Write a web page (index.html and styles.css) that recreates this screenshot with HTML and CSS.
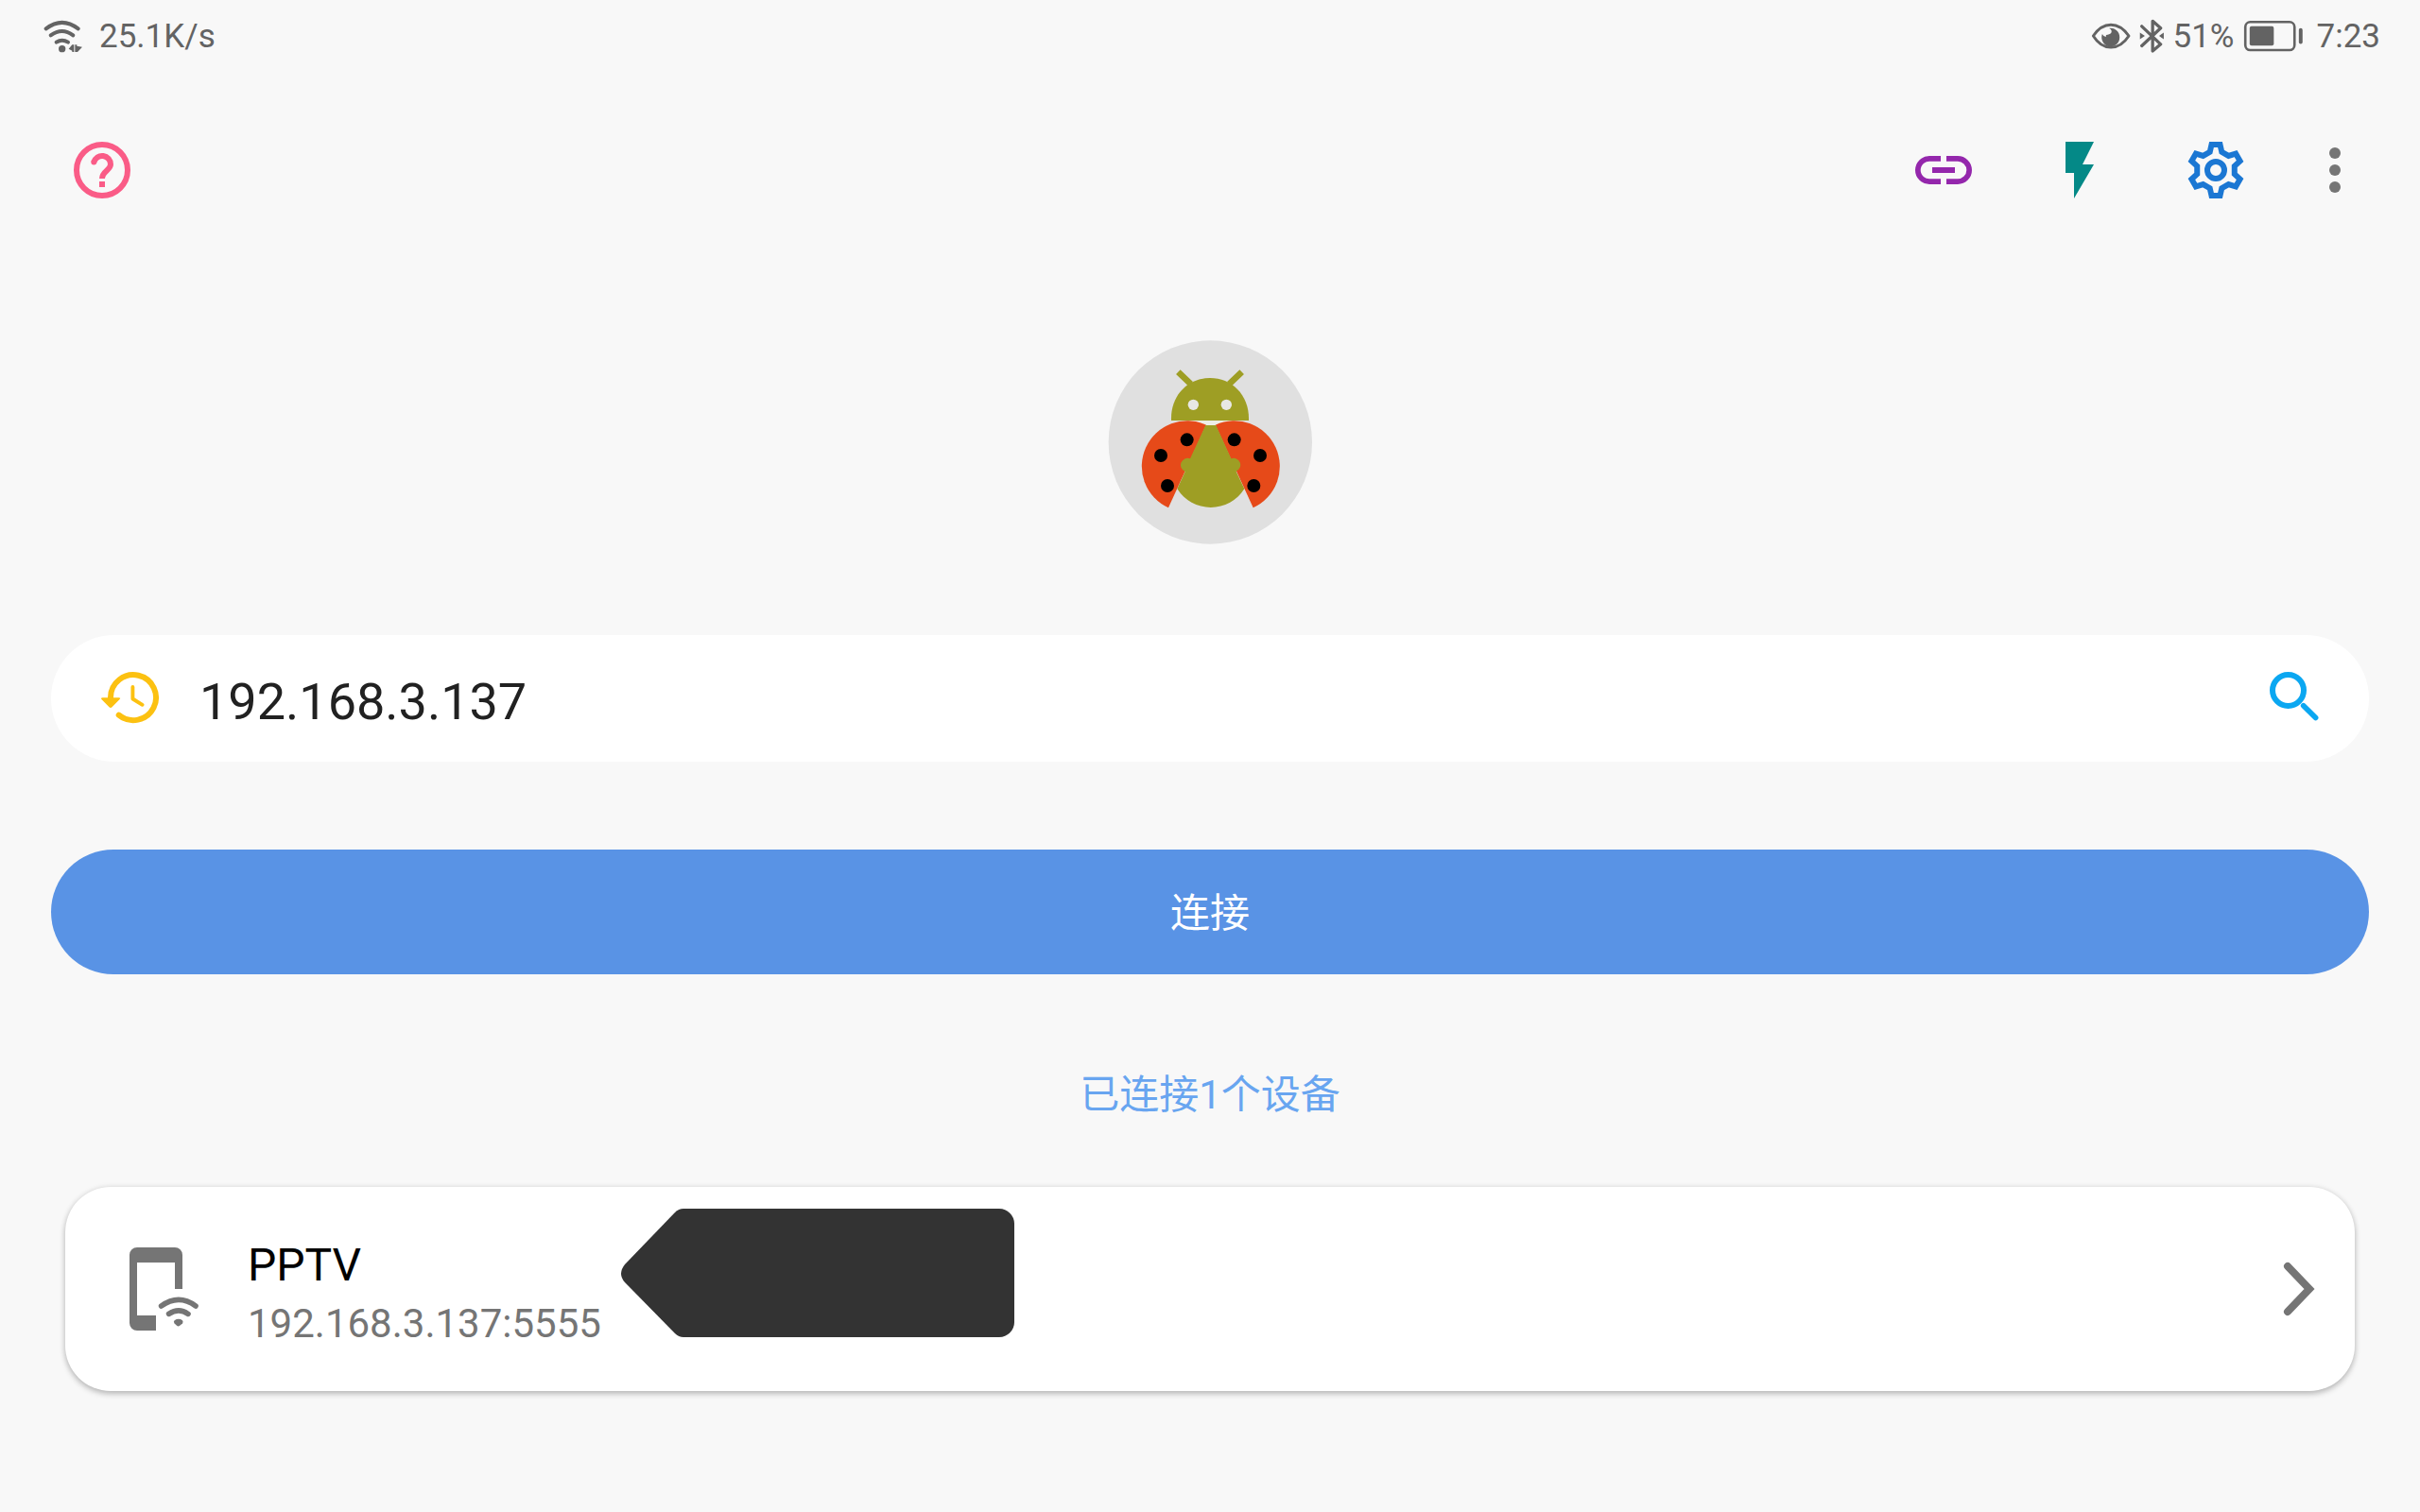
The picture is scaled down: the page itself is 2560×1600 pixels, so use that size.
FILE: index.html
```html
<!DOCTYPE html>
<html lang="zh-CN">
<head>
    <meta charset="UTF-8">
    <meta name="viewport" content="width=device-width, initial-scale=1.0">
    <title>ADB</title>
    <link rel="stylesheet" href="styles.css">
</head>
<body>
    <div class="status-bar">
        <div class="status-group network">
            <svg class="wifi" viewBox="48 54 126 105" aria-hidden="true">
                <g fill="none" stroke="currentColor" stroke-width="12" stroke-linecap="round">
                    <path d="M56 82Q107 43 158 82"/>
                    <path d="M71 103Q107 77 142 103"/>
                    <path d="M89 125Q107 113 126 125"/>
                </g>
                <circle cx="107" cy="146" r="11"/>
                <path d="M128 146l11-13h6v23h-6v-4zM148 133h6v4l17 3-15 16h-8z"/>
            </svg>
            <span>25.1K/s</span>
        </div>
        <div class="status-group indicators">
            <svg class="eye" viewBox="64 54 126 110" aria-hidden="true">
                <path d="M70 109Q94 73 127 73T185 109Q161 146 127 146T70 109z" fill="none" stroke="currentColor" stroke-width="9" stroke-linejoin="round"/>
                <path d="M99 103Q104 113 112 111Q109 104 117 105Q131 102 129 92Q128 87 121 84A29 30 0 1 1 99 103z"/>
            </svg>
            <svg class="bluetooth" viewBox="221 54 80 110" aria-hidden="true">
                <path d="M228 78l61 58-26 22V61l26 23-61 57" fill="none" stroke="currentColor" stroke-width="10" stroke-linecap="round" stroke-linejoin="round"/>
                <path d="M222 98l16 11-16 11zM299 98l-15 11 15 11z"/>
            </svg>
            <span>51%</span>
            <svg class="battery" viewBox="545 54 192 110" aria-hidden="true">
                <rect x="550" y="64" width="159" height="91" rx="16" fill="none" stroke="currentColor" stroke-width="8"/>
                <rect x="564" y="78" width="78" height="62" rx="6"/>
                <rect x="723" y="84" width="12" height="51" rx="6"/>
            </svg>
            <span class="clock">7:23</span>
        </div>
    </div>

    <header class="toolbar">
        <button class="tool help" type="button" aria-label="帮助">
            <svg viewBox="0 0 24 24">
                <g fill="none" stroke="currentColor" stroke-width="2">
                    <circle cx="12" cy="12" r="9"/>
                    <path d="M9.100 9.200A3 3 0 0 1 15 10c0 2-3 2.400-3 5"/>
                </g>
                <circle cx="9.100" cy="9.200" r="1"/>
                <path d="M11 16h2v2h-2z"/>
            </svg>
        </button>
        <span class="spacer"></span>
        <button class="tool link" type="button" aria-label="链接">
            <svg viewBox="0 0 24 24"><path d="M3.900 12c0-1.710 1.390-3.100 3.100-3.100h4V7H7a5 5 0 0 0 0 10h4v-1.900H7c-1.710 0-3.100-1.390-3.100-3.100zM8 13h8v-2H8zM17 7h-4v1.900h4a3.100 3.100 0 0 1 0 6.200h-4V17h4a5 5 0 0 0 0-10z"/></svg>
        </button>
        <button class="tool flash" type="button" aria-label="快捷">
            <svg viewBox="0 0 24 24"><path d="M7 2v11h3v9l7-12h-4l4-8z"/></svg>
        </button>
        <button class="tool settings" type="button" aria-label="设置">
            <svg viewBox="-12 -12 24 24">
                <g fill="none" stroke="currentColor" stroke-width="2">
                    <path d="M-1.500-9H1.500L2.100-6.400 4.490-5.020 7.040-5.800 8.540-3.200 6.590-1.380V1.380L8.540 3.200 7.040 5.800 4.490 5.020 2.100 6.400 1.500 9H-1.500L-2.100 6.400-4.490 5.020-7.040 5.800-8.540 3.200-6.590 1.380V-1.380L-8.540-3.200-7.040-5.800-4.490-5.020-2.100-6.400z"/>
                    <circle r="3"/>
                </g>
            </svg>
        </button>
        <button class="tool more" type="button" aria-label="更多">
            <svg viewBox="0 0 24 24"><circle cx="12" cy="6" r="2"/><circle cx="12" cy="12" r="2"/><circle cx="12" cy="18" r="2"/></svg>
        </button>
    </header>

    <main class="content">
        <svg class="logo" viewBox="36 30 648 648" aria-hidden="true">
            <circle cx="361" cy="354" r="323" fill="#e0e0e0"/>
            <!-- head -->
            <path d="M237 285C234 205 290 150 360 150S486 205 483 285z" fill="#9e9e24"/>
            <path d="M259 131l40 38M461 131l-40 38" stroke="#9e9e24" stroke-width="20"/>
            <circle cx="307" cy="235" r="17" fill="#e8e8e4"/>
            <circle cx="412" cy="235" r="17" fill="#e8e8e4"/>
            <path d="M290 286h140l-50 16h-40z" fill="#eeeee6"/>
            <!-- wings -->
            <path d="M348 299A144 144 0 1 0 228 562z" fill="#e64a19"/>
            <path d="M377 299A144 144 0 1 1 497 562z" fill="#e64a19"/>
            <!-- body -->
            <path d="M346 300h33l48 106a20 20 0 0 1 16 40l26 56A126 126 0 0 1 256 502l25-55a20 20 0 0 1 16-41z" fill="#9e9e24"/>
            <g fill="#000">
                <circle cx="287" cy="346" r="21"/>
                <circle cx="204" cy="396" r="21"/>
                <circle cx="225" cy="492" r="21"/>
                <circle cx="437" cy="346" r="21"/>
                <circle cx="519" cy="396" r="21"/>
                <circle cx="499" cy="492" r="21"/>
            </g>
        </svg>

        <form class="address">
            <button class="icon-button history" type="button" aria-label="历史记录">
                <svg viewBox="0 0 24 24">
                    <g fill="none" stroke="currentColor" stroke-linecap="round">
                        <path d="M5 12.500V12a8 8 0 1 1 2.900 6.200" stroke-width="2"/>
                        <path d="M12.800 8.300v4.200l3.400 2.100" stroke-width="1.300" stroke-linejoin="round"/>
                    </g>
                    <path d="M2.100 12.100h5.900q.7 0 .2.600L5.500 15.400q-.5.500-1 0L1.800 12.700q-.4-.6.3-.6z"/>
                </svg>
            </button>
            <input class="ip" type="text" value="192.168.3.137" aria-label="IP 地址">
            <button class="icon-button search" type="button" aria-label="搜索">
                <svg viewBox="0 0 24 24">
                    <g fill="none" stroke="currentColor">
                        <circle cx="9.500" cy="9.500" r="5.500" stroke-width="2"/>
                        <path d="M14.900 14.900l4.300 4.300" stroke-width="1.900" stroke-linecap="round"/>
                    </g>
                </svg>
            </button>
        </form>

        <button class="connect" type="button">连接</button>

        <p class="summary">已连接1个设备</p>

        <a class="device" href="#">
            <svg class="device-icon" viewBox="0 0 24 24" aria-hidden="true">
                <path d="M17 1H7a2 2 0 0 0-2 2v18a2 2 0 0 0 2 2h5v-4H7V5h10v7h2V3a2 2 0 0 0-2-2z"/>
                <g fill="none" stroke="currentColor" stroke-width="1.400" stroke-linecap="round">
                    <path d="M13.400 16.500Q18 13.200 22.500 16.500"/>
                    <path d="M15.400 18.600Q18 16.800 20.500 18.600"/>
                </g>
                <path d="M16.900 20.300Q18 19.600 19 20.300q.3.400 0 .8l-.7.600q-.4.300-.8 0l-.6-.6q-.4-.4 0-.8z"/>
            </svg>
            <span class="device-text">
                <span class="device-name">PPTV</span>
                <span class="device-address">192.168.3.137:5555</span>
            </span>
            <svg class="tag" viewBox="0 0 416 136" aria-hidden="true">
                <path d="M66 0H400a16 16 0 0 1 16 16V120a16 16 0 0 1-16 16H66Q61 136 57 132L4 78Q-4 69 4 59L57 4Q61 0 66 0z"/>
            </svg>
            <svg class="chevron" viewBox="0 0 48 64" aria-hidden="true">
                <path d="M12 8l23 24-23 24" fill="none" stroke="currentColor" stroke-width="8" stroke-linecap="round"/>
            </svg>
        </a>
    </main>
</body>
</html>
```

FILE: styles.css
```css
* {
    box-sizing: border-box;
}
body {
    margin: 0;
    background-color: #f8f8f8;
    font-family: Roboto, "Noto Sans CJK SC", sans-serif;
}
button {
    padding: 0;
    border: none;
    background: none;
    font-family: inherit;
    cursor: pointer;
}
svg {
    display: block;
    flex-shrink: 0;
    fill: currentColor;
}

/* status bar */
.status-bar {
    display: flex;
    justify-content: space-between;
    height: 76px;
    padding: 0 42px 0 46px;
    color: #636363;
    font-size: 35px;
}
.status-group {
    display: flex;
    align-items: center;
}
.network {
    gap: 17px;
}
.indicators {
    gap: 9px;
}
.wifi {
    width: 42px;
    height: 35px;
}
.eye {
    width: 42px;
    height: 36px;
}
.bluetooth {
    width: 27px;
    height: 36px;
}
.battery {
    width: 64px;
    height: 36px;
}
.clock {
    margin-left: 5px;
}

/* toolbar */
.toolbar {
    display: flex;
    margin-top: 32px;
    padding: 0 36px;
}
.spacer {
    flex: 1;
}
.tool {
    display: flex;
    align-items: center;
    justify-content: center;
    width: 144px;
    height: 144px;
}
.tool svg,
.icon-button svg {
    width: 72px;
    height: 72px;
}
.help {
    color: #fa5c87;
}
.link {
    color: #9427ac;
}
.flash {
    color: #048987;
}
.settings {
    color: #1b77d3;
}
.more {
    width: 108px;
    color: #757575;
}

/* content */
.content {
    display: flex;
    flex-direction: column;
    padding: 108px 54px;
}
.logo {
    align-self: center;
    width: 216px;
    height: 216px;
}
.address {
    display: flex;
    align-items: center;
    height: 134px;
    margin-top: 96px;
    padding: 0 42px 2px 48px;
    border-radius: 67px;
    background-color: #fff;
}
.history {
    color: #fcc111;
}
.search {
    color: #0ba7f1;
}
.ip {
    flex: 1;
    min-width: 0;
    height: 100%;
    padding: 8px 37px 0;
    border: none;
    outline: none;
    background: none;
    color: #212121;
    font-family: inherit;
    font-size: 54px;
}
.connect {
    height: 132px;
    margin-top: 93px;
    padding-bottom: 6px;
    border-radius: 66px;
    background-color: #5993e5;
    color: #fff;
    font-size: 42px;
}
.summary {
    margin: 97px 0 66px;
    color: #68a5f0;
    font-size: 42px;
    line-height: 62px;
    text-align: center;
}
.device {
    display: flex;
    align-items: center;
    height: 216px;
    margin: 0 15px;
    padding: 0 35px 0 48px;
    border-radius: 48px;
    background-color: #fff;
    box-shadow: 0 3px 6px rgba(0, 0, 0, 0.24), 0 0 6px rgba(0, 0, 0, 0.08);
    color: #757575;
    text-decoration: none;
}
.device-icon {
    width: 96px;
    height: 96px;
}
.device-text {
    display: flex;
    flex-direction: column;
    margin-left: 49px;
}
.device-name {
    color: #000;
    font-size: 48px;
    line-height: 74px;
}
.device-address {
    font-size: 42px;
    line-height: 50px;
}
.tag {
    align-self: flex-start;
    width: 416px;
    height: 136px;
    margin: 23px 0 0 21px;
    color: #333;
}
.chevron {
    width: 48px;
    height: 64px;
    margin-left: auto;
}
```
